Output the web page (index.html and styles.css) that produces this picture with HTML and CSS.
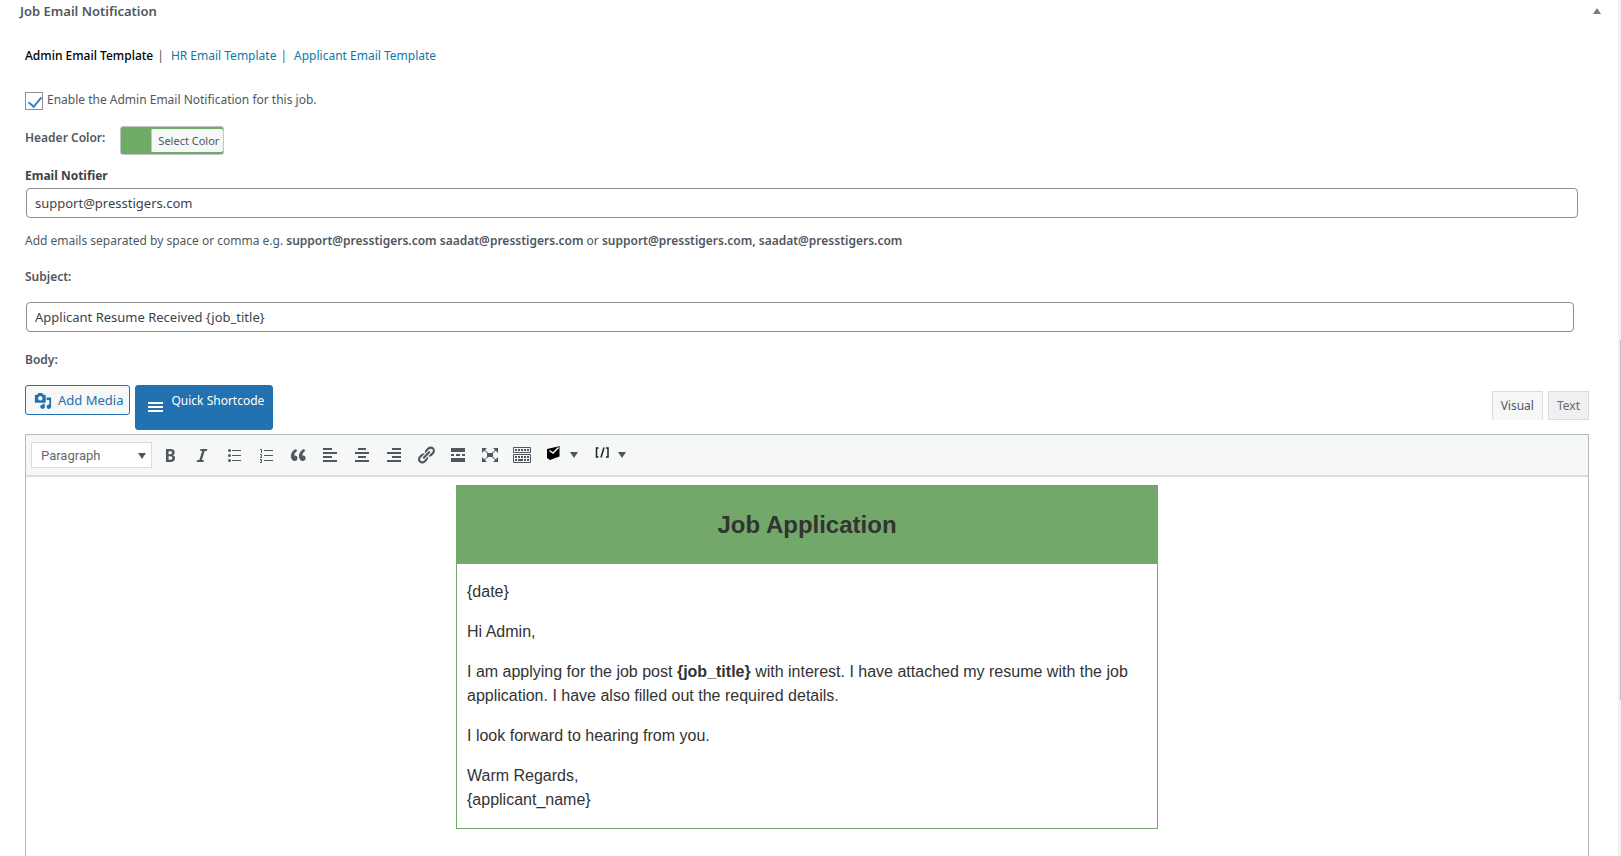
FILE: index.html
```html
<!DOCTYPE html>
<html lang="en">
<head>
  <meta charset="UTF-8" />
  <meta name="viewport" content="width=device-width, initial-scale=1.0" />
  <title>Job Email Notification</title>
  <link rel="stylesheet" href="styles.css">
</head>
<body>
  <div class="postbox">
    <div class="postbox-header">
      <h2>Job Email Notification</h2>
      <button type="button" class="handle" aria-label="Toggle panel"></button>
    </div>

    <div class="inside">
      <nav class="template-tabs">
        <a href="#admin" class="current">Admin Email Template</a><span>|</span>
        <a href="#hr">HR Email Template</a><span>|</span>
        <a href="#applicant">Applicant Email Template</a>
      </nav>

      <div class="enable-row">
        <input type="checkbox" id="enable-admin" checked>
        <label for="enable-admin">Enable the Admin Email Notification for this job.</label>
      </div>

      <div class="color-row">
        <span class="label">Header Color:</span>
        <button type="button" class="color-picker"><span>Select Color</span></button>
      </div>

      <label class="label notifier-label" for="notifier">Email Notifier</label>
      <input type="text" class="text-input" id="notifier" value="support@presstigers.com">
      <p class="hint">Add emails separated by space or comma e.g. <b>support@presstigers.com saadat@presstigers.com</b> or <b>support@presstigers.com, saadat@presstigers.com</b></p>

      <label class="label" for="subject">Subject:</label>
      <input type="text" class="text-input subject-input" id="subject" value="Applicant Resume Received {job_title}">

      <span class="label">Body:</span>
      <div class="editor-tools">
        <button type="button" class="btn">
          <svg viewBox="0 0 20 20" width="18" height="18"><path d="M13 11V4c0-.55-.45-1-1-1h-1.67L9 1H5L3.67 3H2c-.55 0-1 .45-1 1v7c0 .55.45 1 1 1h10c.55 0 1-.45 1-1zM7 4.5c1.38 0 2.5 1.12 2.5 2.5S8.38 9.5 7 9.5 4.5 8.38 4.5 7 5.62 4.5 7 4.5zM14 6h5v10.5c0 1.38-1.12 2.5-2.5 2.5S14 17.88 14 16.5s1.12-2.5 2.5-2.5c.17 0 .34.02.5.05V9h-3V6zm-4 8.05V13h2v3.5c0 1.38-1.12 2.5-2.5 2.5S7 17.88 7 16.5 8.12 14 9.5 14c.17 0 .34.02.5.05z"/></svg>
          Add Media
        </button>
        <button type="button" class="btn btn-primary">
          <svg viewBox="0 0 20 20" width="20" height="20"><path d="M3 5h15v2H3zM3 9h15v2H3zM3 13h15v2H3z"/></svg>
          <span>Quick Shortcode</span>
        </button>
        <div class="editor-tabs">
          <button type="button" class="active">Visual</button>
          <button type="button">Text</button>
        </div>
      </div>

      <div class="editor">
        <div class="toolbar">
          <div class="format-select">
            <select aria-label="Format">
              <option>Paragraph</option>
              <option>Heading 1</option>
              <option>Heading 2</option>
              <option>Preformatted</option>
            </select>
          </div>
          <button type="button" aria-label="Bold"><svg viewBox="0 0 20 20"><path d="M6 4v13h4.54c1.37 0 2.46-.33 3.26-1 .8-.66 1.2-1.58 1.2-2.77 0-.84-.17-1.51-.51-2.01s-.9-.85-1.67-1.03v-.09c.57-.1 1.02-.4 1.36-.9s.51-1.13.51-1.91c0-1.14-.39-1.98-1.17-2.5C12.75 4.26 11.5 4 9.78 4H6zm2.57 5.15V6.26h1.36c.73 0 1.27.11 1.61.32.34.22.51.58.51 1.07 0 .54-.16.92-.47 1.15s-.82.35-1.51.35h-1.5zm0 2.19h1.6c1.44 0 2.16.53 2.16 1.61 0 .6-.17 1.05-.51 1.34s-.86.43-1.57.43H8.57v-3.38z"/></svg></button>
          <button type="button" aria-label="Italic"><svg viewBox="0 0 20 20"><path d="M14.78 6h-2.13l-2.8 9h2.12l-.62 2H4.6l.62-2h2.14l2.8-9H8.03l.62-2h6.75z"/></svg></button>
          <button type="button" aria-label="Bulleted list"><svg viewBox="0 0 20 20"><path d="M8 5h9v1H8zM8 10h9v1H8zM8 15h9v1H8z"/><circle cx="5.5" cy="5.5" r="1.5"/><circle cx="5.5" cy="10.5" r="1.5"/><circle cx="5.5" cy="15.5" r="1.5"/></svg></button>
          <button type="button" aria-label="Numbered list"><svg viewBox="0 0 20 20"><path d="M8 5h9v1H8zM8 10h9v1H8zM8 15h9v1H8z"/><path class="thin" d="M4 4.500h1.500V8M4 9.500h1.500v1.500L4.500 12.500H6M4 14.500h1.500v3H4M4.500 16h1"/></svg></button>
          <button type="button" aria-label="Blockquote"><svg viewBox="0 0 20 20"><path d="M9.49 13.22c0-.74-.2-1.38-.61-1.9-.62-.78-1.83-.88-2.53-.72-.29-1.65 1.11-3.75 2.92-4.65L7.88 4c-2.73 1.3-5.42 4.28-4.96 8.05C3.21 14.43 4.59 16 6.54 16c.85 0 1.56-.25 2.12-.75s.83-1.18.83-2.03zm8.05 0c0-.74-.2-1.38-.61-1.9-.63-.78-1.83-.88-2.53-.72-.29-1.65 1.11-3.75 2.92-4.65L15.93 4c-2.73 1.3-5.41 4.28-4.95 8.05.29 2.38 1.66 3.95 3.61 3.95.85 0 1.56-.25 2.12-.75s.83-1.18.83-2.03z"/></svg></button>
          <button type="button" aria-label="Align left"><svg viewBox="0 0 20 20"><path d="M12 5V3H3v2h9zm5 4V7H3v2h14zm-5 4v-2H3v2h9zm5 4v-2H3v2h14z"/></svg></button>
          <button type="button" aria-label="Align center"><svg viewBox="0 0 20 20"><path d="M14 5V3H6v2h8zm3 4V7H3v2h14zm-3 4v-2H6v2h8zm3 4v-2H3v2h14z"/></svg></button>
          <button type="button" aria-label="Align right"><svg viewBox="0 0 20 20"><path d="M17 5V3H8v2h9zm0 4V7H3v2h14zm0 4v-2H8v2h9zm0 4v-2H3v2h14z"/></svg></button>
          <button type="button" aria-label="Insert link"><svg viewBox="0 0 20 20"><path d="M17.74 2.76c1.68 1.69 1.68 4.41 0 6.1l-1.53 1.52c-1.12 1.12-2.7 1.47-4.14 1.09l2.62-2.61.76-.77.76-.76c.84-.84.84-2.2 0-3.04-.84-.85-2.2-.85-3.04 0l-.77.76-3.38 3.38c-.37-1.44-.02-3.02 1.1-4.14l1.52-1.53c1.69-1.68 4.42-1.68 6.1 0zM8.59 13.43l5.34-5.34c.42-.42.42-1.1 0-1.52-.44-.43-1.13-.39-1.53 0l-5.33 5.34c-.42.42-.42 1.1 0 1.52.44.43 1.13.39 1.52 0zm-.76 2.29l4.14-4.15c.38 1.44.03 3.02-1.09 4.14l-1.52 1.53c-1.69 1.68-4.41 1.68-6.1 0-1.68-1.68-1.68-4.42 0-6.1l1.53-1.52c1.12-1.12 2.7-1.47 4.14-1.1l-4.14 4.15c-.85.84-.85 2.2 0 3.05.84.84 2.2.84 3.04 0z"/></svg></button>
          <button type="button" aria-label="Read more tag"><svg viewBox="0 0 20 20"><path d="M17 7V3H3v4h14zM6 11V9H3v2h3zm6 0V9H8v2h4zm5 0V9h-3v2h3zm0 6v-4H3v4h14z"/></svg></button>
          <button type="button" aria-label="Fullscreen"><svg viewBox="0 0 20 20"><path d="M7 8h6v4H7zM2 3h5L5.500 4.500 4 6 2 8zM18 3v5l-2-2-1.500-1.500L13 3zM2 17v-5l2 2 1.500 1.500L7 17zM18 17h-5l1.500-1.500L16 14l2-2z"/><path class="thin" d="M3.500 4.500l13 11M16.500 4.500l-13 11"/></svg></button>
          <button type="button" aria-label="Toolbar toggle"><svg viewBox="0 0 20 20"><path class="thin" d="M1.500 2.500h17v5h-17zM1.500 9.500h17v8h-17z"/><path d="M3 4h2v2H3zM6 4h2v2H6zM9 4h2v2H9zM12 4h2v2h-2zM15 4h2v2h-2zM3 11h2v2H3zM6 11h2v2H6zM9 11h2v2H9zM12 11h2v2h-2zM15 11h2v2h-2zM3 14h2v2H3zM6 14h5v2H6zM12 14h2v2h-2zM15 14h2v2h-2z"/></svg></button>
          <button type="button" class="menu-btn" aria-label="Email shortcodes"><svg viewBox="0 0 20 20"><path class="black" d="M3 4L14 1.500 15.500 1v10.500L6 15 3 13z"/><path class="check" d="M5.500 5.500L9 8l5.500-5.500"/></svg><i class="caret"></i></button>
          <button type="button" class="menu-btn" aria-label="Shortcodes"><svg viewBox="0 0 20 20"><path class="brackets" d="M6.500 3h-2v9h2M14 3h2v9h-2M12 2.500l-3 10"/></svg><i class="caret"></i></button>
        </div>

        <div class="content" contenteditable="true">
          <div class="email">
            <div class="email-header"><h1>Job Application</h1></div>
            <div class="email-body">
              <p>{date}</p>
              <p>Hi Admin,</p>
              <p>I am applying for the job post <b>{job_title}</b> with interest. I have attached my resume with the job application. I have also filled out the required details.</p>
              <p>I look forward to hearing from you.</p>
              <p>Warm Regards,<br>{applicant_name}</p>
            </div>
          </div>
        </div>
      </div>
    </div>
  </div>
  <div class="scroll-thumb"></div>
</body>
</html>
```
FILE: styles.css
```css
* {
  box-sizing: border-box;
}
body {
  margin: 0;
  background: #f0f0f1;
  color: #50575e;
  font-family: "Noto Sans", "Open Sans", sans-serif;
  font-size: 12px;
  line-height: 20px;
}
button, input, select {
  font-family: inherit;
  margin: 0;
}
button {
  cursor: pointer;
}
svg {
  fill: currentColor;
}

.postbox {
  display: flex;
  flex-direction: column;
  min-height: 100vh;
  margin-right: 3px;
  background: #fff;
}
.postbox-header {
  display: flex;
  justify-content: space-between;
  align-items: center;
  padding: 1px 17px 0 20px;
}
.postbox-header h2 {
  margin: 0;
  font-size: 13px;
  font-weight: 600;
}
.handle {
  padding: 0;
  background: none;
  border: 4px solid transparent;
  border-top: 0;
  border-bottom: 6px solid #787c82;
}
.inside {
  flex: 1;
  display: flex;
  flex-direction: column;
  padding: 25px 29px 0 25px;
}

/* Template tabs */
.template-tabs {
  display: flex;
  margin-bottom: 26px;
}
.template-tabs a {
  color: #0a7aa8;
  text-decoration: none;
}
.template-tabs a.current {
  color: #000;
  font-weight: 500;
}
.template-tabs span {
  margin: 0 7px 0 4px;
}

/* Fields */
.enable-row {
  display: flex;
  gap: 4px;
  line-height: 16px;
}
.enable-row input {
  appearance: none;
  width: 18px;
  height: 18px;
  border: 1px solid #8c8f94;
  background: #fff;
}
.enable-row input:checked::before {
  content: "";
  display: block;
  width: 6px;
  height: 11px;
  margin: 1px 0 0 5px;
  border: solid #3582c4;
  border-width: 0 2px 2px 0;
  transform: rotate(40deg);
}
.color-row {
  display: flex;
  gap: 15px;
  margin: 16px 0 11px;
  line-height: 23px;
}
.label {
  font-weight: 600;
}
.notifier-label {
  color: #3c434a;
  font-weight: 700;
}
.color-picker {
  height: 29px;
  padding: 2px 0 2px 30px;
  border: 1px solid #c3c4c7;
  border-radius: 3px;
  background: #70ab68;
  color: #50575e;
  font-size: 11px;
}
.color-picker span {
  display: block;
  padding: 0 4px 0 6px;
  border-left: 1px solid #c3c4c7;
  border-radius: 0 2px 2px 0;
  background: #f6f7f7;
  line-height: 23px;
}
.text-input {
  height: 30px;
  margin: 2px 11px 0 1px;
  padding: 0 8px;
  border: 1px solid #8c8f94;
  border-radius: 4px;
  background: #fff;
  color: #3c434a;
  font-size: 13px;
}
.hint {
  margin: 13px 0 16px;
}
.hint b {
  font-weight: 600;
}
.subject-input {
  margin: 15px 15px 18px 1px;
}

/* Media buttons and editor tabs */
.editor-tools {
  display: flex;
  align-items: flex-start;
  gap: 5px;
  margin: 15px 0 4px;
}
.btn {
  display: flex;
  gap: 6px;
  padding: 4px 6px 4px 8px;
  border: 1px solid #2271b1;
  border-radius: 3px;
  background: #f6f7f7;
  color: #2271b1;
  font-size: 13px;
  line-height: 20px;
}
.btn svg {
  margin-top: 2px;
}
.btn-primary {
  padding: 5px 8px 18px 9px;
  background: #2271b1;
  color: #fff;
  font-size: 12px;
}
.btn-primary svg {
  margin-top: 6px;
  margin-bottom: -6px;
}
.editor-tabs {
  display: flex;
  gap: 5px;
  margin: 6px 0 0 auto;
}
.editor-tabs button {
  height: 29px;
  padding: 0 8px;
  border: 1px solid #dcdcde;
  background: #f0f0f1;
  color: #646970;
  font-size: 12px;
}
.editor-tabs .active {
  border-bottom-color: #f6f7f7;
  background: #f6f7f7;
  color: #50575e;
}

/* Editor */
.editor {
  flex: 1;
  border: 1px solid #b4b9be;
  border-bottom: 0;
}
.toolbar {
  display: flex;
  align-items: center;
  gap: 4px;
  height: 42px;
  padding: 0 5px;
  border-bottom: 2px solid #dcdcde;
  background: #f6f7f7;
}
.toolbar button {
  display: flex;
  align-items: center;
  padding: 4px;
  border: 0;
  background: none;
  color: #50575e;
}
.toolbar svg {
  width: 20px;
  height: 20px;
}
.format-select {
  position: relative;
}
.format-select select {
  appearance: none;
  width: 121px;
  height: 26px;
  padding: 0 9px;
  border: 1px solid #dcdcde;
  border-radius: 0;
  background: #fff;
  color: #646970;
  font-family: Roboto, sans-serif;
  font-size: 13px;
}
.format-select::after {
  content: "";
  position: absolute;
  top: 11px;
  right: 6px;
  border: 4px solid transparent;
  border-top: 6px solid #50575e;
  border-bottom: 0;
  pointer-events: none;
}
.toolbar .menu-btn {
  gap: 6px;
}
.toolbar .menu-btn + .menu-btn {
  padding-left: 6px;
}
.caret {
  border: 4px solid transparent;
  border-top: 6px solid #50575e;
  border-bottom: 0;
}
.thin {
  fill: none;
  stroke: currentColor;
}
.black {
  fill: #000;
}
.check {
  fill: none;
  stroke: #f6f7f7;
  stroke-width: 1.5;
}
.brackets {
  fill: none;
  stroke: #1d2327;
  stroke-width: 1.5;
}

/* Email preview */
.content {
  padding: 8px 10px;
  outline: none;
  color: #333;
  font-family: "Liberation Sans", Arial, sans-serif;
  font-size: 16px;
  line-height: 24px;
}
.email {
  max-width: 702px;
  margin: 0 auto;
  border: 1px solid #72a96a;
}
.email-header {
  padding: 20px;
  background: #72a96a;
  text-align: center;
}
.email-header h1 {
  margin: 0;
  font-size: 24px;
  line-height: 38px;
}
.email-body {
  padding: 0 10px;
}
.email-body p {
  margin: 16px 0;
}

.scroll-thumb {
  position: absolute;
  top: 340px;
  right: 0;
  width: 1px;
  height: 360px;
  background: #c1c1c1;
}
```
